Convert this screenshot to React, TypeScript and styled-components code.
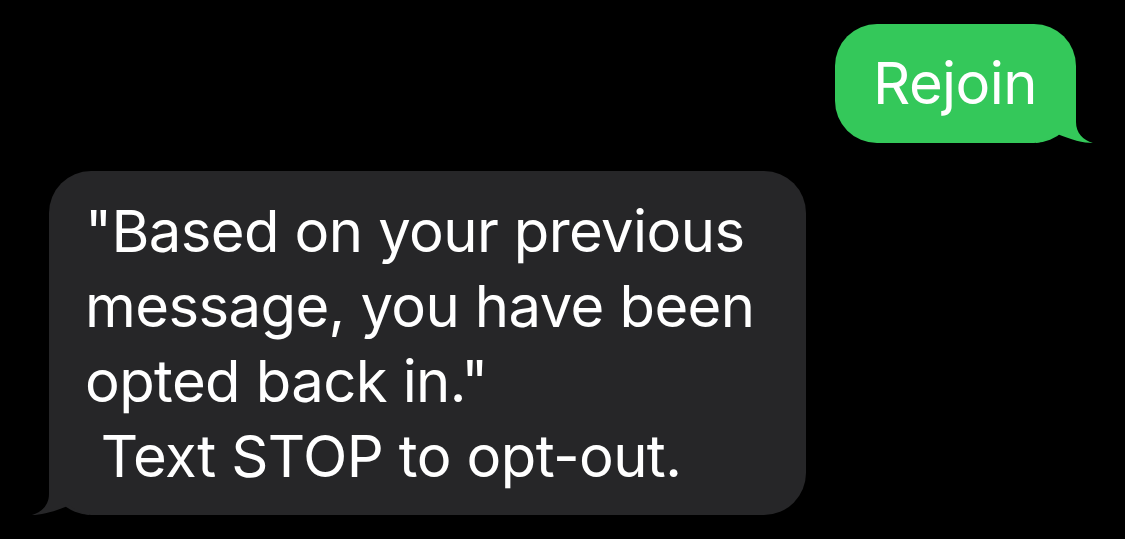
import styled, { createGlobalStyle } from "styled-components";

const GlobalStyle = createGlobalStyle`
  html, body {
    margin: 0;
    padding: 0;
    background: #000000;
  }
  body {
    font-family: Inter, "Liberation Sans", sans-serif;
    -webkit-font-smoothing: antialiased;
  }
`;

type Side = "out" | "in";

function Tail({ side }: { side: Side }) {
  const d =
    side === "out"
      ? "M0 0 L40 0 L40 22 C40 33 47 40 57 43 C47 43 36 40 19 33 C14 38 8 42 0 43 Z"
      : "M58 0 L18 0 L18 22 C18 33 11 40 1 43 C11 43 22 40 39 33 C44 38 50 42 58 43 Z";
  return (
    <TailSvg side={side} width="58" height="43" viewBox="0 0 58 43">
      <path d={d} fill={side === "out" ? "#34c85a" : "#262628"} />
    </TailSvg>
  );
}

function App() {
  const received = `"Based on your previous
message, you have been
opted back in."
 Text STOP to opt-out.`;

  return (
    <Page>
      <GlobalStyle />
      <Bubble side="out">
        <Tail side="out" />
        <Text>Rejoin</Text>
      </Bubble>
      <Bubble side="in">
        <Tail side="in" />
        <Text>{received}</Text>
      </Bubble>
    </Page>
  );
}

const Page = styled.div`
  width: 1125px;
  height: 539px;
  box-sizing: border-box;
  padding: 24px 49px 0 49px;
  display: flex;
  flex-direction: column;
  gap: 28px;
  background: #000000;
  overflow: hidden;
`;

const Bubble = styled.div<{ side: Side }>`
  position: relative;
  box-sizing: border-box;
  align-self: ${(p) => (p.side === "out" ? "flex-end" : "flex-start")};
  width: ${(p) => (p.side === "out" ? "241px" : "757px")};
  height: ${(p) => (p.side === "out" ? "119px" : "344px")};
  padding: ${(p) => (p.side === "out" ? "22px 0 0 38px" : "23px 0 0 36px")};
  background: ${(p) => (p.side === "out" ? "#34c85a" : "#262628")};
  border-radius: 42px;
`;

const TailSvg = styled.svg<{ side: Side }>`
  position: absolute;
  bottom: 0;
  ${(p) => (p.side === "out" ? "right: -18px;" : "left: -18px;")}
  display: block;
`;

const Text = styled.div`
  position: relative;
  color: #ffffff;
  font-size: 58px;
  line-height: 75px;
  letter-spacing: -0.6px;
  white-space: pre-wrap;
`;

export default App;
